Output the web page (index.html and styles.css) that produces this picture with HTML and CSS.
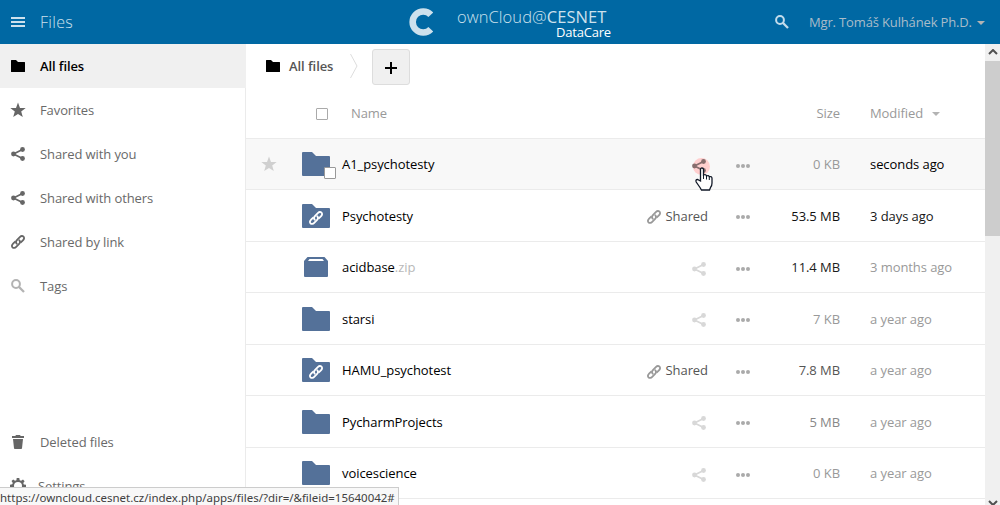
FILE: index.html
```html
<!DOCTYPE html>
<html lang="en">
<head>
<meta charset="utf-8">
<title>Files - ownCloud@CESNET</title>
<link rel="stylesheet" href="styles.css">
</head>
<body>
<svg class="defs" width="0" height="0">
  <symbol id="folder-small" viewBox="0 0 14 12"><path d="M0 .5Q0 0 .5 0H5l2 2h6.500q.5 0 .5.5v9q0 .5-.5.5H.5Q0 12 0 11.500z"/></symbol>
  <symbol id="star" viewBox="0 0 16 16"><path d="M8 .6l2 5.300 5.700.2-4.500 3.500 1.600 5.400L8 11.900 3.200 15l1.600-5.400L.3 6.100 6 5.900z"/></symbol>
  <symbol id="share" viewBox="0 0 14 14"><path d="M11.500 2.500L2.500 7l9 4.500" fill="none" stroke="currentColor" stroke-width="1.700"/><circle cx="2.500" cy="7" r="2.400"/><circle cx="11.500" cy="2.500" r="2.400"/><circle cx="11.500" cy="11.500" r="2.400"/></symbol>
  <symbol id="link" viewBox="0 0 14 14"><g fill="none" stroke="currentColor" stroke-width="1.800" stroke-linecap="round"><path d="M5.700 8.700C4.600 7.500 4.900 6.200 5.900 5.100L8.800 2.100C10 .9 11.500.7 12.500 1.700S13.100 4.200 11.900 5.400L10.100 7.200"/><path d="M8.300 5.300C9.400 6.500 9.100 7.800 8.100 8.900L5.200 11.900C4 13.100 2.500 13.300 1.500 12.300S.9 9.800 2.100 8.600L3.900 6.800"/></g></symbol>
  <symbol id="search" viewBox="0 0 14 14"><circle cx="5" cy="5" r="3.900" fill="none" stroke="currentColor" stroke-width="2"/><path d="M7.800 7.800L13 13" stroke="currentColor" stroke-width="2.300"/></symbol>
  <symbol id="trash" viewBox="0 0 12 14"><path d="M4 0h4l.7 1H12v2H0V1h3.300zM1 4h10l-1 9.300q-.1.700-.8.700H2.800q-.7 0-.8-.700z"/></symbol>
  <symbol id="gear" viewBox="0 0 16 16"><path fill-rule="evenodd" d="M6.700 0h2.600l.4 2.200 1.400.6L13 1.500 14.600 3.200l-1.300 1.800.5 1.400 2.200.4v2.500l-2.200.4-.6 1.400 1.300 1.800-1.700 1.700-1.800-1.300-1.400.6-.4 2.100H6.700l-.4-2.200-1.400-.6-1.800 1.300-1.700-1.700 1.300-1.800-.6-1.400L0 9.300V6.700l2.200-.4.6-1.400-1.300-1.800 1.700-1.700L5 2.700l1.400-.5zM8 4a4 4 0 100 8 4 4 0 000-8z"/></symbol>
  <symbol id="folder" viewBox="0 0 28 24"><path d="M0 1q0-1 1-1h9l4 4h13q1 0 1 1v18q0 1-1 1H1q-1 0-1-1z"/></symbol>
  <symbol id="package" viewBox="0 0 24 20"><path fill-rule="evenodd" d="M3.500 0h17L24 4v15q0 1-1 1H1q-1 0-1-1V4zM5.500 2L4 4h16l-1.500-2z"/></symbol>
  <symbol id="dots" viewBox="0 0 14 4"><circle cx="2" cy="2" r="2"/><circle cx="7" cy="2" r="2"/><circle cx="12" cy="2" r="2"/></symbol>
</svg>

<header class="header">
  <div class="app-menu">
    <span class="burger"><i></i><i></i><i></i></span>
    <span class="app-name">Files</span>
  </div>
  <div class="brand">
    <svg class="brand-mark" viewBox="0 0 24 28"><path d="M21.800 6.800A10.500 10.500 0 1 0 21.800 21.200" fill="none" stroke="currentColor" stroke-width="6.600"/></svg>
    <div class="brand-text">
      <div class="brand-name">ownCloud@<b>CESNET</b></div>
      <div class="brand-sub">DataCare</div>
    </div>
  </div>
  <div class="user">
    <svg class="ico14"><use href="#search"/></svg>
    <span class="user-name">Mgr. Tomáš Kulhánek Ph.D.</span>
    <i class="caret"></i>
  </div>
</header>

<div class="body">
  <nav class="sidebar">
    <a class="nav active"><svg class="nav-icon folder-small"><use href="#folder-small"/></svg><span>All files</span></a>
    <a class="nav"><svg class="nav-icon star"><use href="#star"/></svg><span>Favorites</span></a>
    <a class="nav"><svg class="nav-icon"><use href="#share"/></svg><span>Shared with you</span></a>
    <a class="nav"><svg class="nav-icon"><use href="#share"/></svg><span>Shared with others</span></a>
    <a class="nav"><svg class="nav-icon"><use href="#link"/></svg><span>Shared by link</span></a>
    <a class="nav tags"><svg class="nav-icon"><use href="#search"/></svg><span>Tags</span></a>
    <a class="nav deleted"><svg class="nav-icon"><use href="#trash"/></svg><span>Deleted files</span></a>
    <a class="nav settings"><svg class="nav-icon star"><use href="#gear"/></svg><span>Settings</span></a>
  </nav>

  <main class="content">
    <div class="controls">
      <svg class="crumb-icon"><use href="#folder-small"/></svg>
      <span class="crumb">All files</span>
      <svg class="crumb-arrow" viewBox="0 0 8 24"><path d="M.5 0L7 12 .5 24" fill="none" stroke="#ddd"/></svg>
      <button class="add"><svg viewBox="0 0 12 12"><path d="M6 0v12M0 6h12" stroke="#000" stroke-width="2"/></svg></button>
    </div>
    <div class="row head">
      <span></span>
      <span class="check"></span>
      <span class="head-name">Name</span>
      <span></span><span></span>
      <span class="size">Size</span>
      <span class="modified">Modified <i class="caret"></i></span>
    </div>

    <div class="row hover">
      <svg class="fav"><use href="#star"/></svg>
      <span class="thumb"><svg class="folder"><use href="#folder"/></svg><i class="check select"></i></span>
      <span class="name">A1_psychotesty</span>
      <span class="share touched"><i class="halo"></i><svg class="ico14"><use href="#share"/></svg>
        <svg class="cursor" viewBox="0 0 18 24"><path d="M5.500 14V2.500Q5.500 1 7 1t1.500 1.500V8Q11 7 11.500 9q2-1 2.800.7Q17 9 17 11.500V16q0 3-1.500 4.500l-1 2.500H6.500L5 20.500 1.200 15Q.3 12.500 2.500 12.500z" fill="#fff" stroke="#111827" stroke-width="1.300"/><path d="M8.500 8v4M11.500 9v3.500M14.300 10v3" stroke="#111827" fill="none"/></svg></span>
      <svg class="dots"><use href="#dots"/></svg>
      <span class="size light">0 KB</span>
      <span class="modified now">seconds ago</span>
    </div>
    <div class="row even">
      <span></span>
      <span class="thumb"><svg class="folder"><use href="#folder"/></svg><svg class="linked"><use href="#link"/></svg></span>
      <span class="name">Psychotesty</span>
      <span class="share shared"><svg class="ico14"><use href="#link"/></svg><span>Shared</span></span>
      <svg class="dots"><use href="#dots"/></svg>
      <span class="size dark">53.5 MB</span>
      <span class="modified recent">3 days ago</span>
    </div>
    <div class="row">
      <span></span>
      <span class="thumb"><svg class="package"><use href="#package"/></svg></span>
      <span class="name">acidbase<span class="ext">.zip</span></span>
      <span class="share"><svg class="ico14"><use href="#share"/></svg></span>
      <svg class="dots"><use href="#dots"/></svg>
      <span class="size mid-dark">11.4 MB</span>
      <span class="modified">3 months ago</span>
    </div>
    <div class="row even">
      <span></span>
      <span class="thumb"><svg class="folder"><use href="#folder"/></svg></span>
      <span class="name">starsi</span>
      <span class="share"><svg class="ico14"><use href="#share"/></svg></span>
      <svg class="dots"><use href="#dots"/></svg>
      <span class="size light">7 KB</span>
      <span class="modified">a year ago</span>
    </div>
    <div class="row">
      <span></span>
      <span class="thumb"><svg class="folder"><use href="#folder"/></svg><svg class="linked"><use href="#link"/></svg></span>
      <span class="name">HAMU_psychotest</span>
      <span class="share shared"><svg class="ico14"><use href="#link"/></svg><span>Shared</span></span>
      <svg class="dots"><use href="#dots"/></svg>
      <span class="size mid">7.8 MB</span>
      <span class="modified">a year ago</span>
    </div>
    <div class="row even">
      <span></span>
      <span class="thumb"><svg class="folder"><use href="#folder"/></svg></span>
      <span class="name">PycharmProjects</span>
      <span class="share"><svg class="ico14"><use href="#share"/></svg></span>
      <svg class="dots"><use href="#dots"/></svg>
      <span class="size">5 MB</span>
      <span class="modified">a year ago</span>
    </div>
    <div class="row">
      <span></span>
      <span class="thumb"><svg class="folder"><use href="#folder"/></svg></span>
      <span class="name">voicescience</span>
      <span class="share"><svg class="ico14"><use href="#share"/></svg></span>
      <svg class="dots"><use href="#dots"/></svg>
      <span class="size light">0 KB</span>
      <span class="modified">a year ago</span>
    </div>
  </main>

  <div class="scrollbar">
    <svg class="arrow" viewBox="0 0 10 6"><path d="M1 5l4-4 4 4" fill="none" stroke="#505050" stroke-width="2"/></svg>
    <i class="scroll-thumb"></i>
    <svg class="arrow down" viewBox="0 0 10 6"><path d="M1 1l4 4 4-4" fill="none" stroke="#505050" stroke-width="2"/></svg>
  </div>
</div>
<div class="status">https://owncloud.cesnet.cz/index.php/apps/files/?dir=/&amp;fileid=15640042#</div>
</body>
</html>
```

FILE: styles.css
```css
* { box-sizing: border-box; }
body {
  margin: 0;
  width: 1000px;
  height: 505px;
  overflow: hidden;
  background: #fff;
  font: 13px/20px "Open Sans", "Noto Sans", sans-serif;
  letter-spacing: -.07px;
  color: #000;
}
svg { display: block; fill: currentColor; flex: none; }
.defs { position: absolute; }
.ico14 { width: 14px; height: 14px; }

.header {
  display: grid;
  grid-template-columns: 409px 1fr 226px;
  height: 44px;
  background: #0068a3;
  color: #cde1ed;
}
.app-menu { display: flex; align-items: center; padding-left: 11px; }
.burger { display: grid; gap: 2px; width: 14px; margin-right: 15px; }
.burger i { height: 2px; background: #cde1ed; }
.app-name { font-size: 16px; font-weight: 300; letter-spacing: .3px; }
.brand { display: flex; }
.brand-mark { width: 24px; height: 28px; margin-top: 8px; }
.brand-text { width: 160px; margin-left: 24px; padding-top: 7px; }
.brand-name { font-size: 16.500px; line-height: 19px; font-weight: 300; letter-spacing: .06px; white-space: nowrap; }
.brand-name b { font-weight: 400; }
.brand-sub { margin-left: 99px; font-size: 13px; line-height: 12px; letter-spacing: -.2px; color: #fff; }
.user { display: flex; align-items: center; color: #a9bcc9; }
.user svg { margin-left: 1px; color: #c2dcec; }
.user-name { margin-left: 20px; letter-spacing: -.15px; white-space: nowrap; }
.caret { border: 4px solid transparent; border-top-color: #b3b3b3; border-bottom: 0; }
.user .caret { margin-left: 5px; margin-top: 2px; }

.body { display: grid; grid-template-columns: 246px 739px 15px; height: 461px; }
.sidebar { border-right: 1px solid #ebebeb; letter-spacing: -.1px; }
.nav { display: flex; align-items: center; height: 44px; padding-left: 11px; color: #696969; }
.nav.active { margin-right: -1px; background: #f0f0f0; color: #000; font-weight: 600; }
.nav-icon { width: 14px; height: 14px; margin-right: 15px; color: #666; }
.nav-icon.folder-small { height: 12px; color: #000; }
.nav-icon.star { width: 16px; height: 16px; margin: 0 14px 0 -1px; }
.nav.tags .nav-icon { color: #b3b3b3; }
.nav.deleted { margin-top: 112px; }
.nav.settings .nav-icon { margin-right: 12px; }

.controls { display: flex; align-items: center; height: 45px; padding-left: 20px; }
.crumb-icon { width: 14px; height: 12px; margin-bottom: 1px; }
.crumb { margin: 0 0 2px 9px; width: 61px; color: #555; font-weight: 600; white-space: nowrap; }
.crumb-arrow { width: 8px; height: 24px; margin-bottom: 1px; }
.add {
  display: grid;
  place-items: center;
  width: 38px;
  height: 36px;
  margin: 1px 0 0 14px;
  padding: 2px 0 0;
  border: 1px solid #ddd;
  border-radius: 3px;
  background: #f0f0f0;
}
.add svg { width: 12px; height: 12px; }

.row {
  display: grid;
  grid-template-columns: 56px 40px 1fr 80px 44px 60px 145px;
  align-items: center;
  height: 51px;
  border-bottom: 1px solid #ebebeb;
}
.row.even { height: 52px; padding-top: 1px; }
.row.head { height: 50px; padding-bottom: 1px; color: #999; }
.row.hover { background: #f8f8f8; }
.check { display: block; width: 12px; height: 12px; border: 1px solid #aaa; border-radius: 1px; background: #fff; }
.head .check { margin: 1px 0 0 14px; }
.head-name { padding-left: 9px; }
.fav { width: 16px; height: 16px; margin-left: 15px; color: #d0d0d0; }
.thumb { position: relative; width: 28px; color: #547199; }
.folder { width: 28px; height: 24px; }
.package { width: 24px; height: 20px; margin: 0 2px; }
.linked { position: absolute; left: 7px; top: 7px; width: 14px; height: 14px; color: #fff; }
.select { position: absolute; left: 22px; top: 15px; border-color: #999; }
.ext { color: #b8b8b8; }
.share { position: relative; display: flex; justify-content: flex-end; align-items: center; padding-right: 30px; color: #d8d8d8; }
.share .ico14 { margin-top: 4px; }
.even .share .ico14 { margin-top: 2px; }
.share.shared { padding-right: 28px; margin-left: -10px; color: #555; }
.shared .ico14 { margin-right: 5px; color: #999; }
.share.touched { color: #876d6d; }
.halo { position: absolute; left: 37px; top: 3px; width: 17px; height: 17px; border-radius: 50%; background: #ffcfcf; }
.touched .ico14 { position: relative; }
.touched .cursor { position: absolute; left: 39px; top: 12px; width: 18px; height: 24px; }
.dots { width: 14px; height: 4px; margin-top: 4px; color: #aaa; }
.even .dots { margin-top: 2px; }
.size { justify-self: end; color: #888; white-space: nowrap; }
.head .size, .row .light { color: #999; }
.row .dark { color: #111; }
.row .mid-dark { color: #1c1c1c; }
.row .mid { color: #555; }
.modified { display: flex; align-items: center; padding-left: 30px; color: #999; white-space: nowrap; }
.modified .caret { margin-left: 9px; margin-top: 1px; }
.modified.now { color: #000; }
.modified.recent { color: #161616; }

.scrollbar { display: flex; flex-direction: column; align-items: center; background: #f0f0f0; }
.arrow { width: 10px; height: 6px; margin: 5px 0 6px 1px; }
.scroll-thumb { width: 15px; height: 175px; background: #cdcdcd; }
.arrow.down { margin: auto 0 2px 1px; }
.status {
  position: absolute;
  left: 0;
  top: 487px;
  width: 399px;
  height: 18px;
  padding-top: 1px;
  border: 1px solid #ccc;
  border-width: 1px 1px 0 0;
  background: #f8f8f8;
  color: #404040;
  font: 11.500px/18px "Noto Sans", sans-serif;
  letter-spacing: -.01px;
  white-space: nowrap;
}
```
